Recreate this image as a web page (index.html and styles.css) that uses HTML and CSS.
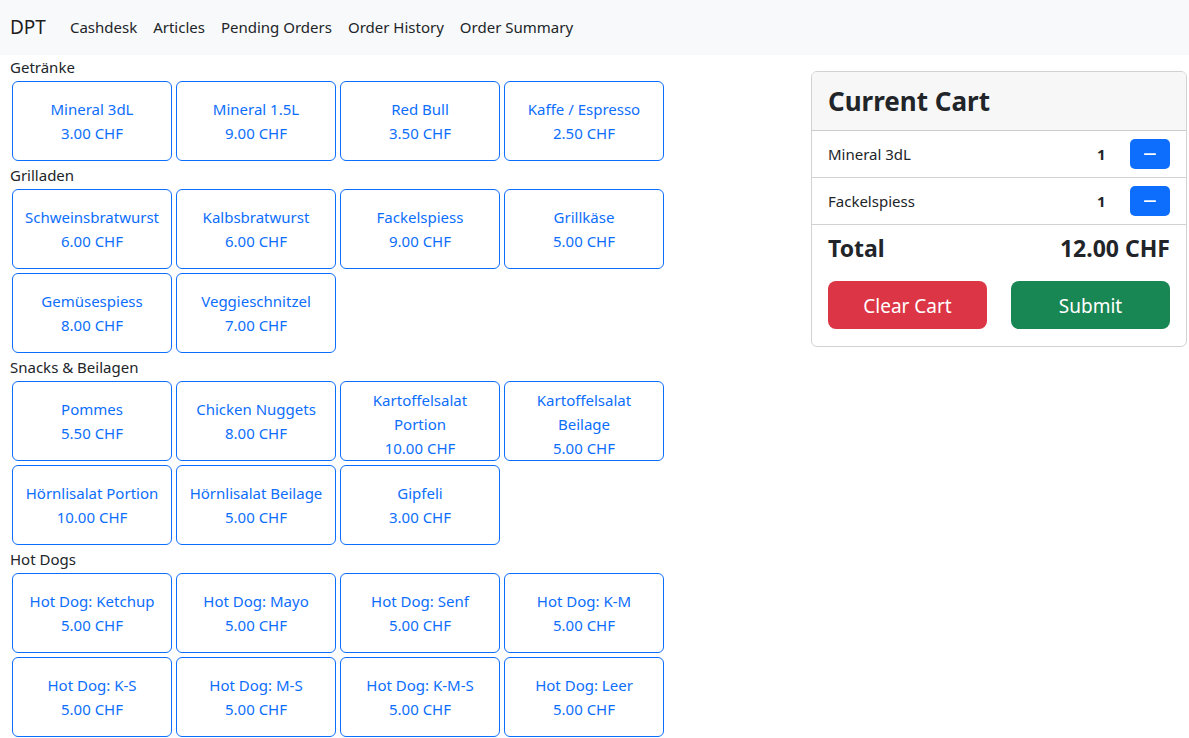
FILE: index.html
```
<!DOCTYPE html>
<html lang="de">
<head>
<meta charset="utf-8">
<title>DPT</title>
<link rel="stylesheet" href="styles.css">
</head>
<body>
<nav class="navbar">
  <span class="brand">DPT</span>
  <a class="nav-link" href="#">Cashdesk</a>
  <a class="nav-link" href="#">Articles</a>
  <a class="nav-link" href="#">Pending Orders</a>
  <a class="nav-link" href="#">Order History</a>
  <a class="nav-link" href="#">Order Summary</a>
</nav>
<main class="layout">
  <section class="articles">
    <div class="category">Getränke</div>
    <div class="grid">
      <button class="article"><span>Mineral 3dL</span><span>3.00 CHF</span></button>
      <button class="article"><span>Mineral 1.5L</span><span>9.00 CHF</span></button>
      <button class="article"><span>Red Bull</span><span>3.50 CHF</span></button>
      <button class="article"><span>Kaffe / Espresso</span><span>2.50 CHF</span></button>
    </div>
    <div class="category">Grilladen</div>
    <div class="grid">
      <button class="article"><span>Schweinsbratwurst</span><span>6.00 CHF</span></button>
      <button class="article"><span>Kalbsbratwurst</span><span>6.00 CHF</span></button>
      <button class="article"><span>Fackelspiess</span><span>9.00 CHF</span></button>
      <button class="article"><span>Grillkäse</span><span>5.00 CHF</span></button>
      <button class="article"><span>Gemüsespiess</span><span>8.00 CHF</span></button>
      <button class="article"><span>Veggieschnitzel</span><span>7.00 CHF</span></button>
    </div>
    <div class="category">Snacks &amp; Beilagen</div>
    <div class="grid">
      <button class="article"><span>Pommes</span><span>5.50 CHF</span></button>
      <button class="article"><span>Chicken Nuggets</span><span>8.00 CHF</span></button>
      <button class="article narrow"><span>Kartoffelsalat Portion</span><span>10.00 CHF</span></button>
      <button class="article narrow"><span>Kartoffelsalat Beilage</span><span>5.00 CHF</span></button>
      <button class="article"><span>Hörnlisalat Portion</span><span>10.00 CHF</span></button>
      <button class="article"><span>Hörnlisalat Beilage</span><span>5.00 CHF</span></button>
      <button class="article"><span>Gipfeli</span><span>3.00 CHF</span></button>
    </div>
    <div class="category">Hot Dogs</div>
    <div class="grid">
      <button class="article"><span>Hot Dog: Ketchup</span><span>5.00 CHF</span></button>
      <button class="article"><span>Hot Dog: Mayo</span><span>5.00 CHF</span></button>
      <button class="article"><span>Hot Dog: Senf</span><span>5.00 CHF</span></button>
      <button class="article"><span>Hot Dog: K-M</span><span>5.00 CHF</span></button>
      <button class="article"><span>Hot Dog: K-S</span><span>5.00 CHF</span></button>
      <button class="article"><span>Hot Dog: M-S</span><span>5.00 CHF</span></button>
      <button class="article"><span>Hot Dog: K-M-S</span><span>5.00 CHF</span></button>
      <button class="article"><span>Hot Dog: Leer</span><span>5.00 CHF</span></button>
    </div>
  </section>
  <aside class="cart">
    <div class="card-header"><h2>Current Cart</h2></div>
    <ul class="cart-list">
      <li class="cart-item">
        <span class="item-name">Mineral 3dL</span>
        <span class="item-qty">1</span>
        <button class="btn-minus" aria-label="remove"><svg width="14" height="14" viewBox="0 0 16 16"><path d="M2 8h12" stroke="#fff" stroke-width="2" stroke-linecap="round"/></svg></button>
      </li>
      <li class="cart-item">
        <span class="item-name">Fackelspiess</span>
        <span class="item-qty">1</span>
        <button class="btn-minus" aria-label="remove"><svg width="14" height="14" viewBox="0 0 16 16"><path d="M2 8h12" stroke="#fff" stroke-width="2" stroke-linecap="round"/></svg></button>
      </li>
    </ul>
    <div class="card-body">
      <div class="total"><span>Total</span><span>12.00 CHF</span></div>
      <div class="actions">
        <button class="btn-lg btn-danger">Clear Cart</button>
        <button class="btn-lg btn-success">Submit</button>
      </div>
    </div>
  </aside>
</main>
</body>
</html>
```
FILE: styles.css
```
* { box-sizing: border-box; }
html, body { margin: 0; padding: 0; }
body {
  font-family: "Noto Sans", "Open Sans", sans-serif;
  font-size: 15px;
  line-height: 24px;
  color: #212529;
  background: #fff;
}
.navbar {
  display: flex;
  align-items: center;
  height: 55px;
  padding: 0 10px 2px;
  background: #f8f9fa;
}
.brand {
  font-size: 19px;
  color: rgba(0,0,0,.9);
  margin-right: 16px;
  line-height: 30px;
}
.nav-link {
  color: #212529;
  text-decoration: none;
  padding: 8px 8px;
  font-size: 15px;
}
.layout {
  display: flex;
  align-items: flex-start;
  justify-content: space-between;
  padding: 0 2px 0 10px;
}
.articles { width: 660px; }
.category { line-height: 24px; height: 24px; }
.grid { display: flex; flex-wrap: wrap; width: 664px; }
.article {
  width: 160px;
  height: 80px;
  margin: 2px;
  padding: 0 6px;
  display: flex;
  flex-direction: column;
  align-items: center;
  justify-content: center;
  border: 1px solid #0d6efd;
  border-radius: 6px;
  background: #fff;
  color: #0d6efd;
  font-family: inherit;
  font-size: 15px;
  line-height: 24px;
  text-align: center;
}
.article.narrow {
  padding: 6px 12px 0;
  justify-content: flex-start;
}
.cart {
  width: 376px;
  margin-top: 16px;
  border: 1px solid rgba(0,0,0,.175);
  border-radius: 6px;
  overflow: hidden;
}
.card-header {
  background: #f7f7f7;
  padding: 12px 16px;
  border-bottom: 1px solid rgba(0,0,0,.175);
}
.card-header h2 {
  margin: 0;
  font-size: 26px;
  font-weight: 700;
  line-height: 34px;
}
.cart-list { list-style: none; margin: 0; padding: 0; }
.cart-item {
  display: flex;
  align-items: center;
  padding: 8px 16px;
  border-bottom: 1px solid rgba(0,0,0,.175);
  font-size: 15px;
}
.item-name { flex: 1; }
.item-qty { font-weight: 700; width: 33px; }
.btn-minus {
  width: 40px;
  height: 30px;
  border: none;
  border-radius: 5px;
  background: #0d6efd;
  display: flex;
  align-items: center;
  justify-content: center;
  padding: 0;
}
.card-body { padding: 9px 16px 17px; }
.total {
  display: flex;
  justify-content: space-between;
  font-size: 23px;
  font-weight: 700;
  line-height: 29px;
}
.actions {
  display: flex;
  justify-content: space-between;
  margin-top: 18px;
}
.btn-lg {
  width: 159px;
  height: 48px;
  border: none;
  border-radius: 8px;
  color: #fff;
  font-family: inherit;
  font-size: 19px;
  padding: 2px 0 0;
}
.btn-danger { background: #dc3545; }
.btn-success { background: #198754; }
```
